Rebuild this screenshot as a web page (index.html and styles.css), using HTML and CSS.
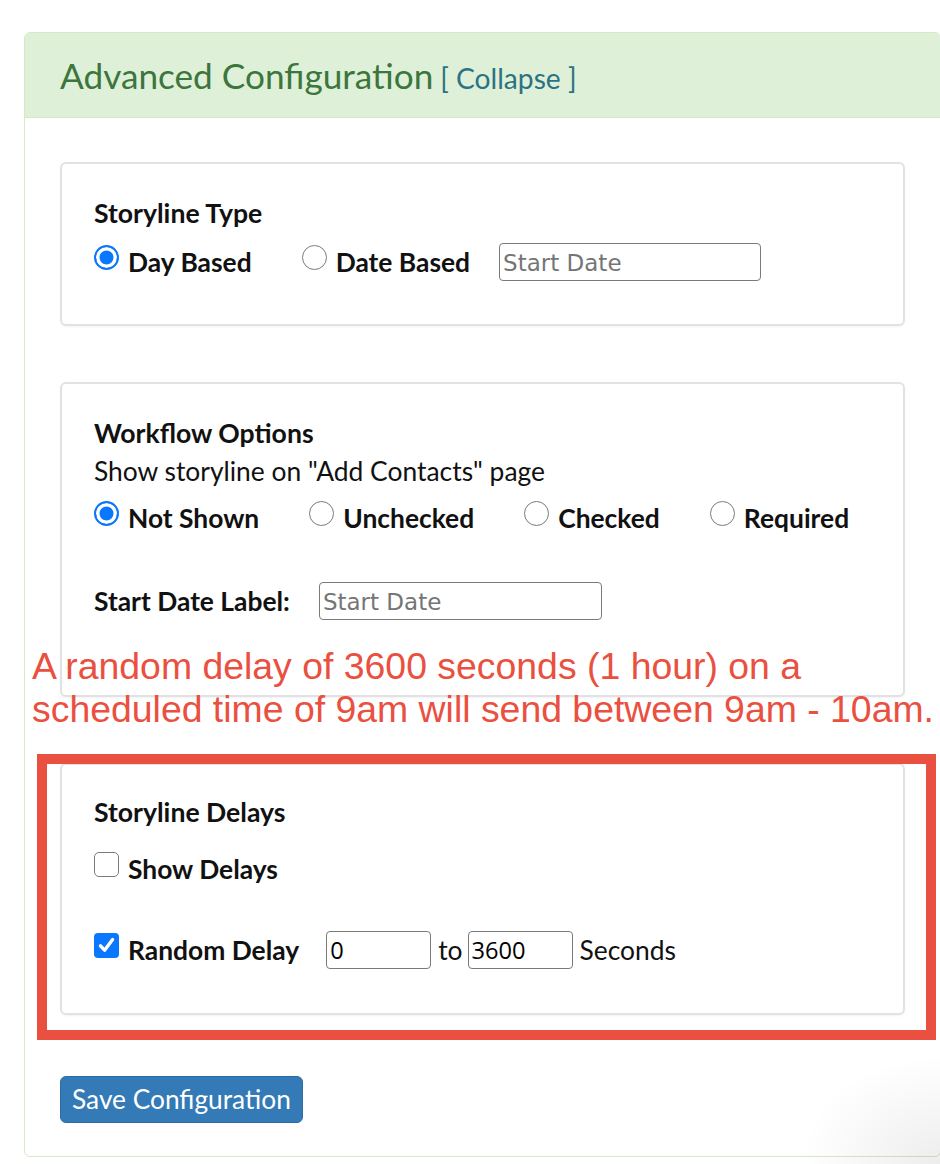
FILE: index.html
```html
<!DOCTYPE html>
<html lang="en">
<head>
<meta charset="utf-8">
<title>Advanced Configuration</title>
<link rel="stylesheet" href="styles.css">
</head>
<body>
<div class="panel">
  <div class="panel-heading">
    <span class="panel-title">Advanced Configuration</span> <a class="collapse-link">[ Collapse ]</a>
  </div>
  <div class="panel-body">
    <div class="card card-type">
      <div class="card-title">Storyline Type</div>
      <div class="row row-type">
        <label class="opt"><span class="radio checked"></span>Day Based</label>
        <label class="opt"><span class="radio"></span>Date Based</label>
        <input class="field field-date" type="text" placeholder="Start Date">
      </div>
    </div>

    <div class="card card-workflow">
      <div class="card-title">Workflow Options</div>
      <div class="line">Show storyline on "Add Contacts" page</div>
      <div class="row row-radios">
        <label class="opt"><span class="radio checked"></span>Not Shown</label>
        <label class="opt"><span class="radio"></span>Unchecked</label>
        <label class="opt"><span class="radio"></span>Checked</label>
        <label class="opt"><span class="radio"></span>Required</label>
      </div>
      <div class="row row-label">
        <span class="strong">Start Date Label:</span>
        <input class="field field-label" type="text" placeholder="Start Date">
      </div>
    </div>

    <div class="card card-delays">
      <div class="card-title">Storyline Delays</div>
      <div class="row row-show">
        <label class="opt"><span class="checkbox"></span>Show Delays</label>
      </div>
      <div class="row row-random">
        <label class="opt"><span class="checkbox checked"><svg viewBox="0 0 25 25" width="25" height="25"><path d="M6.5 12.8 L10.6 17.2 L18.6 6.6" fill="none" stroke="#fff" stroke-width="3.4" stroke-linecap="round" stroke-linejoin="round"/></svg></span>Random Delay</label>
        <input class="field field-num" type="text" value="0">
        <span class="to">to</span>
        <input class="field field-num field-num2" type="text" value="3600">
        <span class="unit">Seconds</span>
      </div>
    </div>

    <button class="btn-save" type="button">Save Configuration</button>
  </div>
</div>

<div class="note">
  <div>A random delay of 3600 seconds (1 hour) on a</div>
  <div>scheduled time of 9am will send between 9am - 10am.</div>
</div>
<div class="highlight"></div>
<div class="corner-shade"></div>
</body>
</html>
```
FILE: styles.css
```css
html, body {
  margin: 0;
  padding: 0;
  overflow: hidden;
  background: #fff;
}

body {
  position: relative;
  width: 940px;
  height: 1164px;
  font-family: Lato, "Open Sans", sans-serif;
  font-size: 26.4px;
  color: #111;
}

.panel {
  box-sizing: border-box;
  width: 917px;
  margin: 32px 0 0 24px;
  border: 1px solid #d6e9c6;
  border-radius: 6px;
  background: #fff;
}

.panel-heading {
  height: 84px;
  line-height: 84px;
  padding: 0 35px;
  background: #dff0d8;
  border-bottom: 1px solid #d6e9c6;
  border-radius: 5px 5px 0 0;
  white-space: nowrap;
}

.panel-title {
  font-size: 35.2px;
  font-weight: 400;
  color: #3c763d;
}

.collapse-link {
  font-size: 28.2px;
  color: #2b7384;
  text-decoration: none;
}

.panel-body {
  padding: 44px 35px 33px;
}

.card {
  border: 2px solid #e2e2e2;
  border-radius: 6px;
  box-shadow: 0 1px 2px rgba(0, 0, 0, 0.05);
  padding: 0 32px;
}

.card-type {
  padding-top: 30px;
  padding-bottom: 43px;
}

.card-workflow {
  margin-top: 56px;
  padding-top: 30px;
  padding-bottom: 75px;
}

.card-delays {
  margin-top: 66px;
  padding-top: 28px;
  padding-bottom: 44px;
}

.card-title,
.line,
.row {
  line-height: 38px;
  height: 38px;
  white-space: nowrap;
}

.card-title {
  font-weight: 700;
  font-size: 26.6px;
}

.row {
  display: flex;
  align-items: center;
}

.row-type { margin-top: 11px; }
.row-radios { margin-top: 9px; }
.row-label { margin-top: 45px; }
.row-show { margin-top: 19px; }
.row-random { margin-top: 43px; }

.opt {
  display: flex;
  align-items: center;
  font-weight: 700;
}

.opt + .opt {
  margin-left: 50px;
}

.strong {
  font-weight: 700;
}

.radio {
  box-sizing: border-box;
  width: 25px;
  height: 25px;
  margin: 0 9px 9px 0;
  border: 1.6px solid #7b7b7b;
  border-radius: 50%;
  background: #fff;
  flex: none;
}

.radio.checked {
  border: 2px solid #0a78fe;
  background: #0a78fe;
  box-shadow: inset 0 0 0 3.5px #fff;
}

.checkbox {
  box-sizing: border-box;
  width: 25px;
  height: 25px;
  margin: 0 9px 9px 0;
  border: 1.8px solid #7b7b7b;
  border-radius: 5px;
  background: #fff;
  flex: none;
}

.checkbox.checked {
  border: none;
  background: #0a78fe;
  border-radius: 4px;
}

.checkbox svg {
  display: block;
}

.field {
  box-sizing: border-box;
  height: 38px;
  padding: 0 3px;
  border: 1.8px solid #7a7a7a;
  border-radius: 4px;
  background: #fff;
  font-family: "Open Sans", "DejaVu Sans", sans-serif;
  font-size: 23.6px;
  color: #000;
  outline: none;
}

.field::placeholder {
  font-family: "DejaVu Sans", Verdana, sans-serif;
  font-size: 23px;
  color: #757575;
}

.field-date {
  width: 262px;
  margin-left: 29px;
}

.field-label {
  width: 283px;
  margin-left: 29px;
}

.field-num {
  width: 105px;
  margin-left: 27px;
}

.field-num2 {
  margin-left: 5px;
}

.to {
  margin-left: 7px;
}

.unit {
  margin-left: 7px;
}

.btn-save {
  display: block;
  box-sizing: border-box;
  height: 47px;
  margin-top: 61px;
  padding: 0 11px;
  border: 1px solid #2e6da4;
  border-radius: 6px;
  background: #337ab7;
  color: #fff;
  font-family: Lato, "Open Sans", sans-serif;
  font-size: 26.3px;
  line-height: 45px;
}

.note {
  position: absolute;
  left: 32px;
  top: 645px;
  font-family: "Liberation Sans", Arial, sans-serif;
  font-size: 37.4px;
  line-height: 43px;
  color: #ea5040;
  white-space: nowrap;
}

.highlight {
  position: absolute;
  left: 37px;
  top: 754px;
  width: 899px;
  height: 286px;
  box-sizing: border-box;
  border: 10px solid #e9503f;
}

.corner-shade {
  position: absolute;
  right: 0;
  bottom: 0;
  width: 140px;
  height: 110px;
  background: radial-gradient(ellipse at 100% 100%, rgba(0, 0, 0, 0.07), rgba(0, 0, 0, 0) 70%);
  pointer-events: none;
}
```
